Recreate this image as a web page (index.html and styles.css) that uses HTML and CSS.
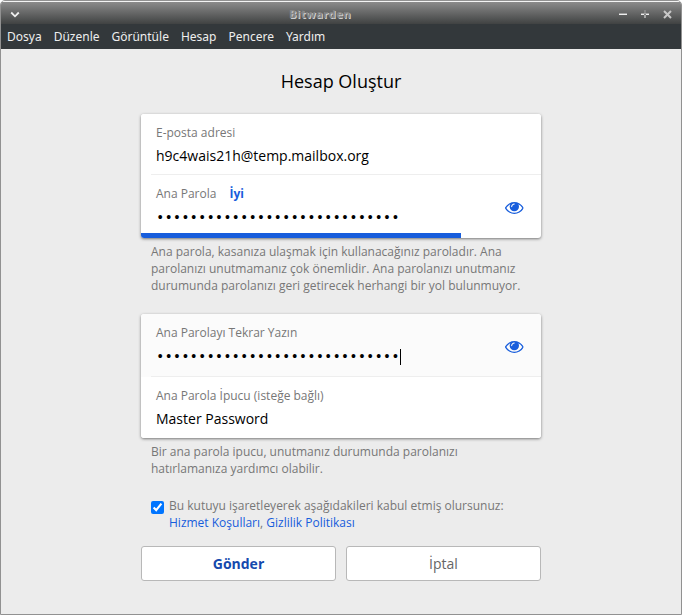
FILE: index.html
```html
<!DOCTYPE html>
<html lang="tr">
<head>
<meta charset="utf-8">
<title>Bitwarden</title>
<link rel="stylesheet" href="styles.css">
</head>
<body>
<svg class="defs" width="0" height="0"><symbol id="eye" viewBox="0 384 1792 1152"><path d="M1664 960q-152-236-381-353 61 104 61 225 0 185-131.5 316.5t-316.5 131.5-316.5-131.5-131.5-316.5q0-121 61-225-229 117-381 353 133 205 333.5 326.5t434.5 121.5 434.5-121.5 333.5-326.5zm-720-384q0-20-14-34t-34-14q-125 0-214.5 89.5t-89.5 214.5q0 20 14 34t34 14 34-14 14-34q0-86 61-147t147-61q20 0 34-14t14-34zm848 384q0 34-20 69-140 230-376.5 368.5t-499.5 138.5-499.5-139-376.5-368q-20-35-20-69t20-69q140-229 376.5-368t499.5-139 499.5 139 376.5 368q20 35 20 69z"/></symbol></svg>
<div class="window">
  <header class="titlebar">
    <svg class="chevron" width="10" height="8" viewBox="0 0 10 8"><path d="M1.2 1.5 5 5.3 8.8 1.5"/></svg>
    <span class="title">Bitwarden</span>
    <div class="controls">
      <svg width="8" height="8" viewBox="0 0 8 8"><path class="dim" d="M0 3.5h8"/><path d="M0 4.5h8"/></svg>
      <svg width="8" height="8" viewBox="0 0 8 8"><path class="dim" d="M0 3.5h8M4 0v5"/><path d="M0 4.5h3M5 4.5h3M4 5v3"/></svg>
      <svg width="9" height="9" viewBox="0 0 9 9"><path class="cross" d="M1 1l7 7M8 1l-7 7"/></svg>
    </div>
  </header>
  <nav class="menu"><span>Dosya</span><span>Düzenle</span><span>Görüntüle</span><span>Hesap</span><span>Pencere</span><span>Yardım</span></nav>
  <main>
    <h1>Hesap Oluştur</h1>
    <section class="card">
      <div class="row">
        <div class="label">E-posta adresi</div>
        <div class="value">h9c4wais21h@temp.mailbox.org</div>
      </div>
      <div class="row password">
        <div>
          <div class="label">Ana Parola <b>İyi</b></div>
          <div class="value dots">•••••••••••••••••••••••••••••</div>
        </div>
        <svg class="eye"><use href="#eye"/></svg>
      </div>
      <div class="meter"><div class="fill"></div></div>
    </section>
    <p class="help first">Ana parola, kasanıza ulaşmak için kullanacağınız paroladır. Ana<br>parolanızı unutmamanız çok önemlidir. Ana parolanızı unutmanız<br>durumunda parolanızı geri getirecek herhangi bir yol bulunmuyor.</p>
    <section class="card">
      <div class="row password focused">
        <div>
          <div class="label">Ana Parolayı Tekrar Yazın</div>
          <div class="value dots">•••••••••••••••••••••••••••••<i class="caret"></i></div>
        </div>
        <svg class="eye"><use href="#eye"/></svg>
      </div>
      <div class="row">
        <div class="label">Ana Parola İpucu (isteğe bağlı)</div>
        <div class="value">Master Password</div>
      </div>
    </section>
    <p class="help second">Bir ana parola ipucu, unutmanız durumunda parolanızı<br>hatırlamanıza yardımcı olabilir.</p>
    <div class="terms">
      <input type="checkbox" checked aria-label="Kabul">
      <div>Bu kutuyu işaretleyerek aşağıdakileri kabul etmiş olursunuz:<br><a>Hizmet Koşulları</a>, <a>Gizlilik Politikası</a></div>
    </div>
    <div class="buttons"><button class="primary">Gönder</button><button>İptal</button></div>
  </main>
</div>
</body>
</html>
```
FILE: styles.css
```css
* { box-sizing: border-box; }
html { background: #fff; }
body { margin: 0; font: 14px/20px "Open Sans", "Noto Sans", sans-serif; color: #000; }
.defs { display: block; }
.window {
  height: 615px;
  border: 1px solid #919191;
  border-radius: 5px 5px 0 0;
  background: #ececec;
  overflow: hidden;
}
.titlebar {
  height: 23px;
  display: grid;
  grid-template-columns: 40px 1fr 82px;
  align-items: center;
  border-top: 1px solid #f4f4f4;
  background: linear-gradient(#8b8b8b, #404242);
}
.chevron { margin: 3px 0 0 9px; fill: none; stroke: #eee; stroke-width: 1.8; }
.title {
  padding-top: 2px;
  text-align: center;
  font: bold 11px/18px "Noto Sans", sans-serif;
  letter-spacing: .6px;
  color: #858585;
  text-shadow: 1px 1px 0 #d0d0d0;
}
.controls { display: flex; align-items: center; gap: 14px; padding: 2px 0 0 20px; }
.controls svg { flex: none; fill: none; stroke: #eee; stroke-width: 1; }
.controls .dim { stroke: #a0a0a0; }
.controls .cross { stroke: #c8c8c8; stroke-width: 2; }
.menu {
  height: 25px;
  padding-left: 6px;
  display: flex;
  gap: 12px;
  background: #33383b;
  color: #eee;
  font: 12px/25px "Noto Sans", sans-serif;
}
main { width: 400px; margin: 0 auto; }
h1 { margin: 0; padding-top: 20px; height: 65px; text-align: center; font-size: 18px; line-height: 25px; font-weight: 400; }
.card {
  height: 124px;
  border-radius: 3px;
  background: #fff;
  box-shadow: 0 1px 3px rgba(0, 0, 0, .5);
  overflow: hidden;
}
.row { height: 61px; padding: 10px 15px; background-color: #fff; }
.row:first-child { background-image: linear-gradient(#eee, #eee); background-size: 390px 1px; background-position: right bottom; background-repeat: no-repeat; }
.label { height: 17px; font-size: 12px; line-height: 17px; color: #777; }
.label b { margin-left: 10px; color: #175ddc; }
.value { margin-top: 5px; height: 20px; white-space: nowrap; }
.password { height: 58px; display: flex; justify-content: space-between; align-items: flex-start; }
.dots { margin-top: 6px; display: flex; align-items: center; font-family: "Liberation Mono", monospace; }
.focused { height: 63px; background-color: #fbfbfb; }
.caret { width: 1px; height: 16px; background: #000; }
.eye { width: 18.67px; height: 12px; margin: 17px 2px 0 0; fill: #175ddc; }
.meter { height: 5px; }
.fill { width: 80%; height: 5px; background: #175ddc; }
.help { margin: 0; padding: 5px 10px 0; font-size: 12px; line-height: 17px; color: #777; white-space: nowrap; }
.first { height: 76px; }
.second { height: 59px; }
.terms { display: flex; height: 49px; padding-left: 10px; gap: 5px; font-size: 12px; line-height: 17px; color: #777; white-space: nowrap; }
.terms input { margin: 4px 0 0; width: 13px; height: 13px; }
.terms a { color: #175ddc; }
.buttons { display: flex; gap: 10px; }
button { flex: 1; height: 35px; border: 1px solid #b8b8b8; border-radius: 3px; background: #fff; color: #666; font: 14px/20px "Open Sans", sans-serif; }
.primary { color: #1549ad; font-weight: 700; }
```
